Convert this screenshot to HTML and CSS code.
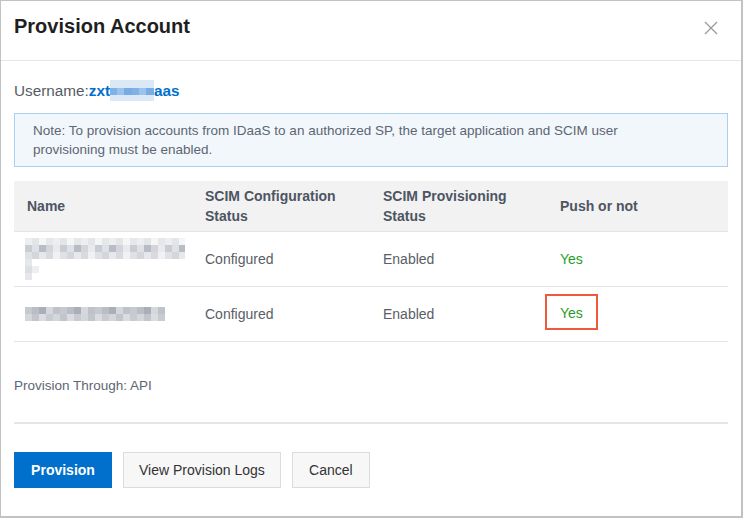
FILE: index.html
```html
<!DOCTYPE html>
<html lang="en">
<head>
    <meta charset="UTF-8">
    <meta name="viewport" content="width=device-width, initial-scale=1.0">
    <title>Provision Account</title>
    <link rel="stylesheet" href="styles.css">
</head>
<body>
    <div class="dialog">
        <div class="dialog-header">
            <h2 class="dialog-title">Provision Account</h2>
            <button class="close-button" aria-label="Close">
                <svg width="14" height="14" viewBox="0 0 14 14">
                    <path d="M1 1 L13 13 M13 1 L1 13" stroke="#9a9a9a" stroke-width="1.3" fill="none"/>
                </svg>
            </button>
        </div>
        <div class="dialog-body">
            <div class="username">
                Username:<span class="username-value">zxt<span class="mask-blue"></span>aas</span>
            </div>
            <div class="note">
                Note: To provision accounts from IDaaS to an authorized SP, the target application and SCIM user provisioning must be enabled.
            </div>
            <table class="app-table">
                <colgroup>
                    <col class="col-name">
                    <col class="col-config">
                    <col class="col-prov">
                    <col>
                </colgroup>
                <thead>
                    <tr>
                        <th>Name</th>
                        <th>SCIM Configuration<br>Status</th>
                        <th>SCIM Provisioning<br>Status</th>
                        <th>Push or not</th>
                    </tr>
                </thead>
                <tbody>
                    <tr>
                        <td>
                            <div class="mask">
                                <div class="mask-line m1"></div>
                                <div class="mask-line m2"></div>
                                <div class="mask-line m3"></div>
                                <div class="mask-line m4"></div>
                                <div class="mask-line m5"></div>
                                <div class="mask-line m4"></div>
                            </div>
                        </td>
                        <td>Configured</td>
                        <td>Enabled</td>
                        <td><span class="yes">Yes</span></td>
                    </tr>
                    <tr>
                        <td>
                            <div class="mask">
                                <div class="mask-line m6"></div>
                                <div class="mask-line m7"></div>
                            </div>
                        </td>
                        <td>Configured</td>
                        <td>Enabled</td>
                        <td><span class="yes highlighted">Yes</span></td>
                    </tr>
                </tbody>
            </table>
            <p class="provision-through">Provision Through: API</p>
            <div class="divider"></div>
            <div class="dialog-footer">
                <button class="btn btn-primary">Provision</button>
                <button class="btn">View Provision Logs</button>
                <button class="btn btn-cancel">Cancel</button>
            </div>
        </div>
    </div>
</body>
</html>
```

FILE: styles.css
```css
body {
    margin: 0;
    background-color: #fff;
    font-family: "Liberation Sans", Arial, sans-serif;
    color: #555;
}
.dialog {
    width: 743px;
    height: 518px;
    box-sizing: border-box;
    border: 1px solid #c2c2c2;
    border-right-width: 2px;
    border-bottom-width: 2px;
    background: #fff;
}
.dialog-header {
    height: 59px;
    display: flex;
    align-items: center;
    justify-content: space-between;
    padding: 0 23px 0 13px;
    border-bottom: 1px solid #e3e6ea;
}
.dialog-title {
    margin: 0 0 8px 0;
    font-size: 20px;
    font-weight: bold;
    color: #1f1f1f;
}
.close-button {
    background: none;
    border: none;
    padding: 0;
    margin-bottom: 6px;
    cursor: pointer;
    display: flex;
}
.dialog-body {
    padding: 0 13px;
}
.username {
    margin-top: 19px;
    font-size: 15.3px;
    line-height: 20px;
    color: #555b66;
}
.username-value {
    color: #0070cc;
    font-weight: bold;
}
.mask-blue {
    display: inline-block;
    width: 44px;
    height: 21px;
    vertical-align: -5px;
    background:
        repeating-linear-gradient(90deg, #7fb2e6 0 7px, #9cc3ec 7px 14px, #78ade3 14px 22px),
        #dbe9f7;
    background-size: 100% 7px, 100% 100%;
    background-repeat: no-repeat;
    background-position: 0 8px, 0 0;
}
.note {
    margin-top: 12px;
    padding: 7px 80px 7px 18px;
    border: 1px solid #a9d0ef;
    background-color: #f2f7fb;
    font-size: 13.5px;
    line-height: 19px;
    color: #5d6673;
}
.app-table {
    margin-top: 14px;
    width: 100%;
    border-collapse: collapse;
    table-layout: fixed;
    font-size: 14px;
}
.col-name,
.col-config {
    width: 178px;
}
.col-prov {
    width: 177px;
}
.app-table th {
    height: 50px;
    padding: 0 13px;
    background-color: #f2f2f2;
    text-align: left;
    font-weight: bold;
    line-height: 20px;
    color: #4d5562;
    border-bottom: 1px solid #e5e5e5;
}
.app-table td {
    height: 54px;
    padding: 0 12px 0 13px;
    color: #5a5e66;
    border-bottom: 1px solid #e5e5e5;
}
.app-table td:first-child {
    padding-left: 11px;
}
.yes {
    color: #1f9e1f;
}
/* annotation box drawn over the cell */
.highlighted {
    display: inline-block;
    position: relative;
    top: -2px;
    margin-left: -15px;
    padding: 9px 13px 7px 13px;
    border: 2px solid #f05a3a;
}
.mask-line {
    height: 7px;
    width: 160px;
    background: repeating-linear-gradient(90deg, #c9ccd2 0 7px, #dfe1e5 7px 14px, #b8bcc4 14px 21px, #d3d5da 21px 28px, #e9eaed 28px 35px);
}
.mask-line.m1 {
    background: repeating-linear-gradient(90deg, #eceef0 0 7px, #e3e5e8 7px 14px, #f5f5f6 14px 21px, #e6e7ea 21px 28px);
}
.mask-line.m3 {
    background: repeating-linear-gradient(90deg, #dfe1e5 0 7px, #d3d6db 7px 14px, #e6e8eb 14px 21px, #d8dadf 21px 28px, #f0f1f3 28px 35px);
}
.mask-line.m4 {
    width: 7px;
    background: #e6e7ea;
}
.mask-line.m5 {
    width: 14px;
    background: linear-gradient(90deg, #dcdee2 0 7px, #eceef0 7px 14px);
}
.mask-line.m6 {
    width: 140px;
    background: repeating-linear-gradient(90deg, #c6c9cf 0 7px, #b9bdc4 7px 14px, #a9aeb7 14px 21px, #d5d7dc 21px 28px, #bfc3c9 28px 35px);
}
.mask-line.m7 {
    width: 140px;
    background: repeating-linear-gradient(90deg, #d3d6db 0 7px, #c2c5cb 7px 14px, #dadce0 14px 21px, #c8cbd1 21px 28px);
}
.provision-through {
    margin: 34px 0 0 0;
    font-size: 13.5px;
    line-height: 20px;
    color: #5d6673;
}
.divider {
    margin-top: 26px;
    height: 2px;
    background-color: #e3e7ec;
}
.dialog-footer {
    margin-top: 28px;
    display: flex;
    gap: 11px;
}
.btn {
    height: 36px;
    padding: 0 15px;
    font-family: "Liberation Sans", Arial, sans-serif;
    font-size: 14px;
    color: #333;
    background-color: #f7f7f7;
    border: 1px solid #dcdcdc;
    cursor: pointer;
}
.btn-primary {
    width: 98px;
    background-color: #0070cc;
    border-color: #0070cc;
    color: #fff;
    font-weight: bold;
}
.btn-cancel {
    width: 78px;
}
```
